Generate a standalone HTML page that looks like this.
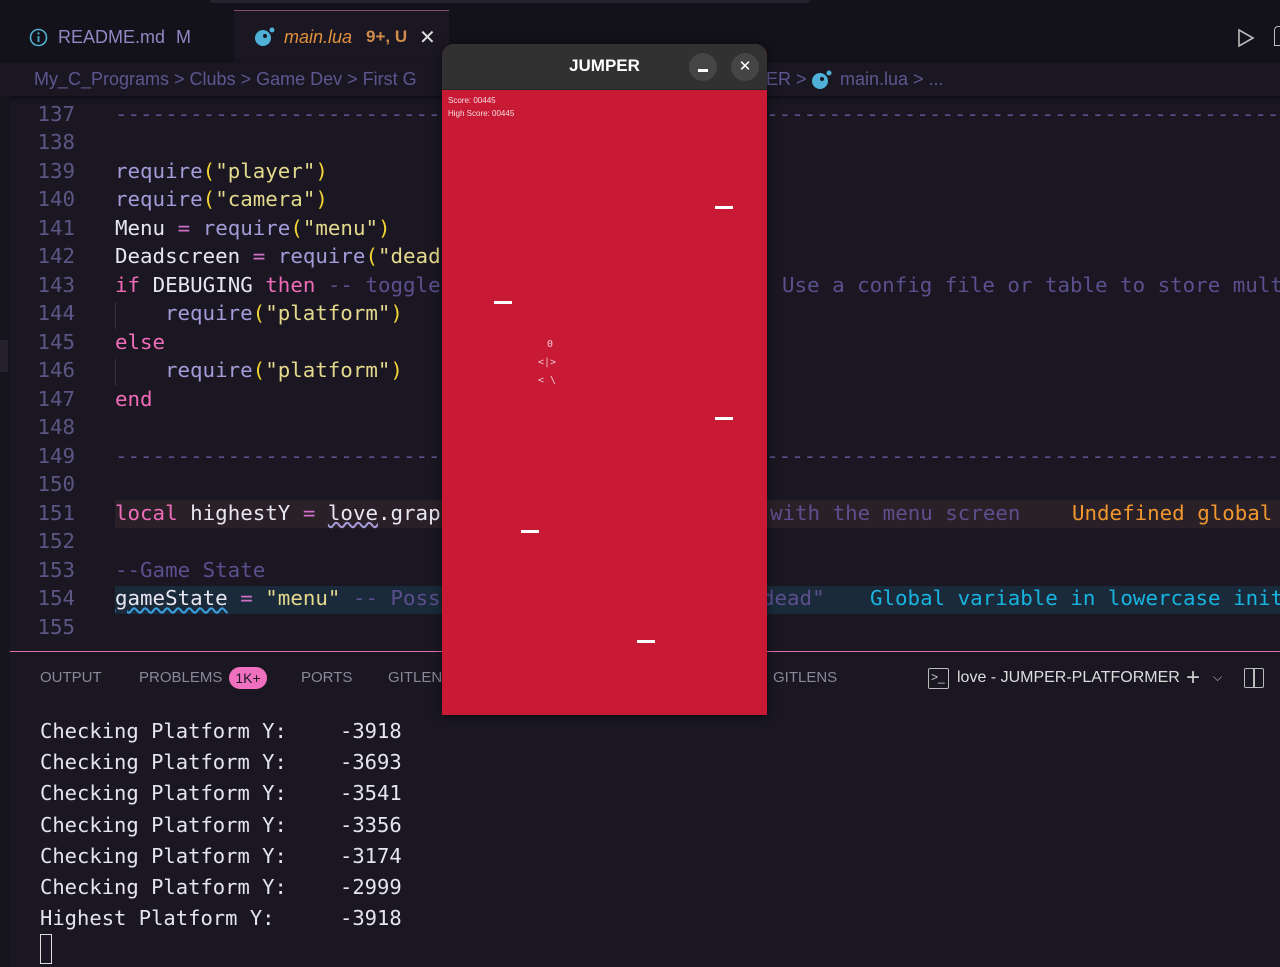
<!DOCTYPE html>
<html><head><meta charset="utf-8"><style>
*{margin:0;padding:0;box-sizing:border-box}
body{width:1280px;height:967px;overflow:hidden;background:#1a1722;position:relative;font-family:"Liberation Sans","DejaVu Sans",sans-serif}
.abs{position:absolute;white-space:pre}
.mono{font-family:"DejaVu Sans Mono","Liberation Mono",monospace;font-size:20.8px}
.ln{position:absolute;width:75px;text-align:right;left:0;color:#5d5684;font-family:"DejaVu Sans Mono",monospace;font-size:20.8px}
.f{color:#a49bd8}.s{color:#e4d98c}.p{color:#f2d234}.k{color:#f06cb8}.c{color:#5b4f8e}.w{color:#e8e6f0}.o{color:#d070c8}
#code{position:absolute;left:0;top:1.5px;width:1280px;height:640px}
</style></head><body>
<!-- tab bar -->
<div class="abs" style="left:0;top:0;width:1280px;height:62px;background:#131119"></div>
<div class="abs" style="left:210px;top:0;width:600px;height:3px;background:#26232e;border-radius:0 0 4px 4px"></div>
<div class="abs" style="left:234px;top:10px;width:215px;height:52px;background:#1a1722;border-top:1px solid #8a4a78"></div>
<svg class="abs" style="left:29px;top:28px" width="19" height="19" viewBox="0 0 19 19"><circle cx="9.5" cy="9.5" r="8" fill="none" stroke="#4fb0d0" stroke-width="1.6"/><rect x="8.6" y="8" width="1.8" height="6" fill="#4fb0d0"/><circle cx="9.5" cy="5.4" r="1.1" fill="#4fb0d0"/></svg>
<div class="abs" style="left:58px;top:27px;font-size:18px;color:#8f88c4">README.md</div>
<div class="abs" style="left:176px;top:27px;font-size:18px;color:#8f88c4">M</div>
<svg class="abs" style="left:254px;top:26px" width="22" height="22" viewBox="0 0 22 22"><circle cx="9" cy="12" r="8" fill="#4fb0d8"/><circle cx="11" cy="10" r="2" fill="#1a1722"/><circle cx="18" cy="4" r="2.5" fill="#4fb0d8"/></svg>
<div class="abs" style="left:284px;top:27px;font-size:18px;color:#e0903c;font-style:italic">main.lua</div>
<div class="abs" style="left:366px;top:27px;font-size:17px;color:#d08c48;font-weight:bold">9+, U</div>
<div class="abs" style="left:419px;top:25px;font-size:20px;color:#ddd">✕</div>
<svg class="abs" style="left:1237px;top:28px" width="18" height="20" viewBox="0 0 18 20"><path d="M2 2 L16 10 L2 18 Z" fill="none" stroke="#bbb" stroke-width="1.6"/></svg>
<div class="abs" style="left:1274px;top:26px;width:8px;height:20px;border:1.6px solid #bbb;border-radius:4px 0 0 0"></div>
<!-- breadcrumb -->
<div class="abs" style="left:0;top:62px;width:1280px;height:34px;background:#1a1722;box-shadow:0 2px 4px #0e0c14"></div>
<div class="abs" style="left:34px;top:69px;font-size:18px;color:#5e5690">My_C_Programs &gt; Clubs &gt; Game Dev &gt; First G</div>
<div class="abs" style="left:766px;top:69px;font-size:18px;color:#5e5690">ER &gt;</div>
<svg class="abs" style="left:811px;top:69px" width="22" height="22" viewBox="0 0 22 22"><circle cx="9" cy="12" r="8" fill="#4fb0d8"/><circle cx="11" cy="10" r="2" fill="#1a1722"/><circle cx="18" cy="4" r="2.5" fill="#4fb0d8"/></svg>
<div class="abs" style="left:840px;top:69px;font-size:18px;color:#5e5690">main.lua &gt; ...</div>
<!-- left strip -->
<div class="abs" style="left:0;top:96px;width:10px;height:871px;background:#16141d"></div>
<div class="abs" style="left:0;top:340px;width:8px;height:32px;background:#24212c"></div>
<div id="code">
<!-- highlights -->
<div class="abs" style="left:115px;top:498px;width:1165px;height:28px;background:#2a2028"></div>
<div class="abs" style="left:115px;top:584px;width:1165px;height:28px;background:#1a2a3a"></div>
<!-- line numbers -->
<div class="ln" style="top:100px">137</div><div class="ln" style="top:128.5px">138</div><div class="ln" style="top:157px">139</div><div class="ln" style="top:185.5px">140</div><div class="ln" style="top:214px">141</div><div class="ln" style="top:242.5px">142</div><div class="ln" style="top:271px">143</div><div class="ln" style="top:299.5px">144</div><div class="ln" style="top:328px">145</div><div class="ln" style="top:356.5px">146</div><div class="ln" style="top:385px">147</div><div class="ln" style="top:413.5px">148</div><div class="ln" style="top:442px">149</div><div class="ln" style="top:470.5px">150</div><div class="ln" style="top:499px">151</div><div class="ln" style="top:527.5px">152</div><div class="ln" style="top:556px">153</div><div class="ln" style="top:584.5px">154</div><div class="ln" style="top:613px">155</div>
<!-- code -->
<div class="abs mono c" style="left:115px;top:100px">-----------------------------------------------------------------------------------------------</div>
<div class="abs mono" style="left:115px;top:157px"><span class="f">require</span><span class="p">(</span><span class="s">"player"</span><span class="p">)</span></div>
<div class="abs mono" style="left:115px;top:185.5px"><span class="f">require</span><span class="p">(</span><span class="s">"camera"</span><span class="p">)</span></div>
<div class="abs mono" style="left:115px;top:214px"><span class="w">Menu</span> <span class="o">=</span> <span class="f">require</span><span class="p">(</span><span class="s">"menu"</span><span class="p">)</span></div>
<div class="abs mono" style="left:115px;top:242.5px"><span class="w">Deadscreen</span> <span class="o">=</span> <span class="f">require</span><span class="p">(</span><span class="s">"dead</span></div>
<div class="abs mono" style="left:115px;top:271px"><span class="k">if</span> <span class="w">DEBUGING</span> <span class="k">then</span> <span class="c">-- toggle</span></div>
<div class="abs mono c" style="left:782px;top:271px">Use a config file or table to store mult</div>
<div class="abs" style="left:115px;top:300px;width:1px;height:27px;background:#35304a"></div>
<div class="abs mono" style="left:165px;top:299.5px"><span class="f">require</span><span class="p">(</span><span class="s">"platform"</span><span class="p">)</span></div>
<div class="abs mono k" style="left:115px;top:328px">else</div>
<div class="abs" style="left:115px;top:357px;width:1px;height:27px;background:#35304a"></div>
<div class="abs mono" style="left:165px;top:356.5px"><span class="f">require</span><span class="p">(</span><span class="s">"platform"</span><span class="p">)</span></div>
<div class="abs mono k" style="left:115px;top:385px">end</div>
<div class="abs mono c" style="left:115px;top:442px">-----------------------------------------------------------------------------------------------</div>
<div class="abs mono" style="left:115px;top:499px"><span class="k">local</span> <span class="w">highestY</span> <span class="o">=</span> <span class="w" style="text-decoration:underline wavy #a49bd8">love</span><span class="w">.grap</span></div>
<div class="abs mono c" style="left:770px;top:499px">with the menu screen</div>
<div class="abs mono" style="left:1072px;top:499px;color:#f0982e">Undefined global</div>
<div class="abs mono c" style="left:115px;top:556px">--Game State</div>
<div class="abs mono" style="left:115px;top:584.5px"><span class="w" style="text-decoration:underline wavy #3aa0e0">gameState</span> <span class="o">=</span> <span class="s">"menu"</span> <span class="c">-- Poss</span></div>
<div class="abs mono c" style="left:762px;top:584.5px">dead"</div>
<div class="abs mono" style="left:870px;top:584.5px;color:#18b4e0">Global variable in lowercase init</div>
</div>
<!-- panel -->
<div class="abs" style="left:10px;top:640px;width:1270px;height:327px;background:#1a1722"></div>
<div class="abs" style="left:10px;top:651px;width:1270px;height:1px;background:#e070b0"></div>
<div class="abs" style="left:40px;top:669px;font-size:15px;color:#8a879a">OUTPUT</div>
<div class="abs" style="left:139px;top:669px;font-size:15px;color:#8a879a">PROBLEMS</div>
<div class="abs" style="left:229px;top:667px;width:38px;height:22px;border-radius:11px;background:#f070c0;color:#1a1722;font-size:14px;text-align:center;line-height:22px">1K+</div>
<div class="abs" style="left:301px;top:669px;font-size:15px;color:#8a879a">PORTS</div>
<div class="abs" style="left:388px;top:669px;font-size:15px;color:#8a879a">GITLEN</div>
<div class="abs" style="left:773px;top:669px;font-size:15px;color:#8a879a">GITLENS</div>
<div class="abs" style="left:928px;top:668px;width:21px;height:21px;border:1.5px solid #bbb;border-radius:2px;color:#ccc;font-size:12px;line-height:17px;padding-left:2px">&gt;_</div>
<div class="abs" style="left:957px;top:669px;font-size:16px;color:#ddd">love - JUMPER-PLATFORMER</div>
<div class="abs" style="left:1186px;top:664px;font-size:24px;color:#ccc;font-weight:300">+</div>
<div class="abs" style="left:1213px;top:670px;font-size:12px;color:#bbb">⌵</div>
<div class="abs" style="left:1244px;top:668px;width:20px;height:20px;border:1.5px solid #bbb;border-radius:2px"></div>
<div class="abs" style="left:1253px;top:668px;width:1.5px;height:20px;background:#bbb"></div>
<!-- terminal -->
<div class="abs mono" style="left:40px;top:716px;color:#e6e4ee;line-height:31.2px;font-size:20.5px">Checking Platform Y:
Checking Platform Y:
Checking Platform Y:
Checking Platform Y:
Checking Platform Y:
Checking Platform Y:
Highest Platform Y:</div>
<div class="abs mono" style="left:340px;top:716px;color:#e6e4ee;line-height:31.2px;font-size:20.5px">-3918
-3693
-3541
-3356
-3174
-2999
-3918</div>
<div class="abs" style="left:40px;top:934px;width:12px;height:30px;border:1.5px solid #ddd"></div>
<!-- game window -->
<div class="abs" style="left:442px;top:44px;width:325px;height:671px;background:#c81a35;border-radius:12px 12px 0 0;overflow:hidden;box-shadow:0 2px 10px rgba(0,0,0,.5)">
<div class="abs" style="left:0;top:0;width:325px;height:46px;background:#313131;border-bottom:1px solid #222"></div>
<div class="abs" style="left:0;top:12px;width:325px;text-align:center;color:#fff;font-size:17px;font-weight:bold">JUMPER</div>
<div class="abs" style="left:247px;top:9px;width:28px;height:28px;border-radius:14px;background:#454545"></div>
<div class="abs" style="left:256px;top:25px;width:10px;height:2.5px;background:#fff"></div>
<div class="abs" style="left:289px;top:9px;width:28px;height:28px;border-radius:14px;background:#454545;color:#fff;text-align:center;line-height:28px;font-size:15px;font-weight:bold">✕</div>
<div class="abs" style="left:6px;top:52px;font-size:8px;color:#f4dde0">Score: 00445</div>
<div class="abs" style="left:6px;top:65px;font-size:8px;color:#f4dde0">High Score: 00445</div>
<div class="abs" style="left:273px;top:162px;width:18px;height:3px;background:#fff"></div>
<div class="abs" style="left:52px;top:257px;width:18px;height:3px;background:#fff"></div>
<div class="abs" style="left:273px;top:373px;width:18px;height:3px;background:#fff"></div>
<div class="abs" style="left:79px;top:486px;width:18px;height:3px;background:#fff"></div>
<div class="abs" style="left:195px;top:596px;width:18px;height:3px;background:#fff"></div>
<div class="abs mono" style="left:90px;top:292px;font-size:10px;color:#f0c8d0;line-height:18px;text-align:center">  0
 &lt;|&gt;
 &lt; \</div>
</div>
</body></html>
